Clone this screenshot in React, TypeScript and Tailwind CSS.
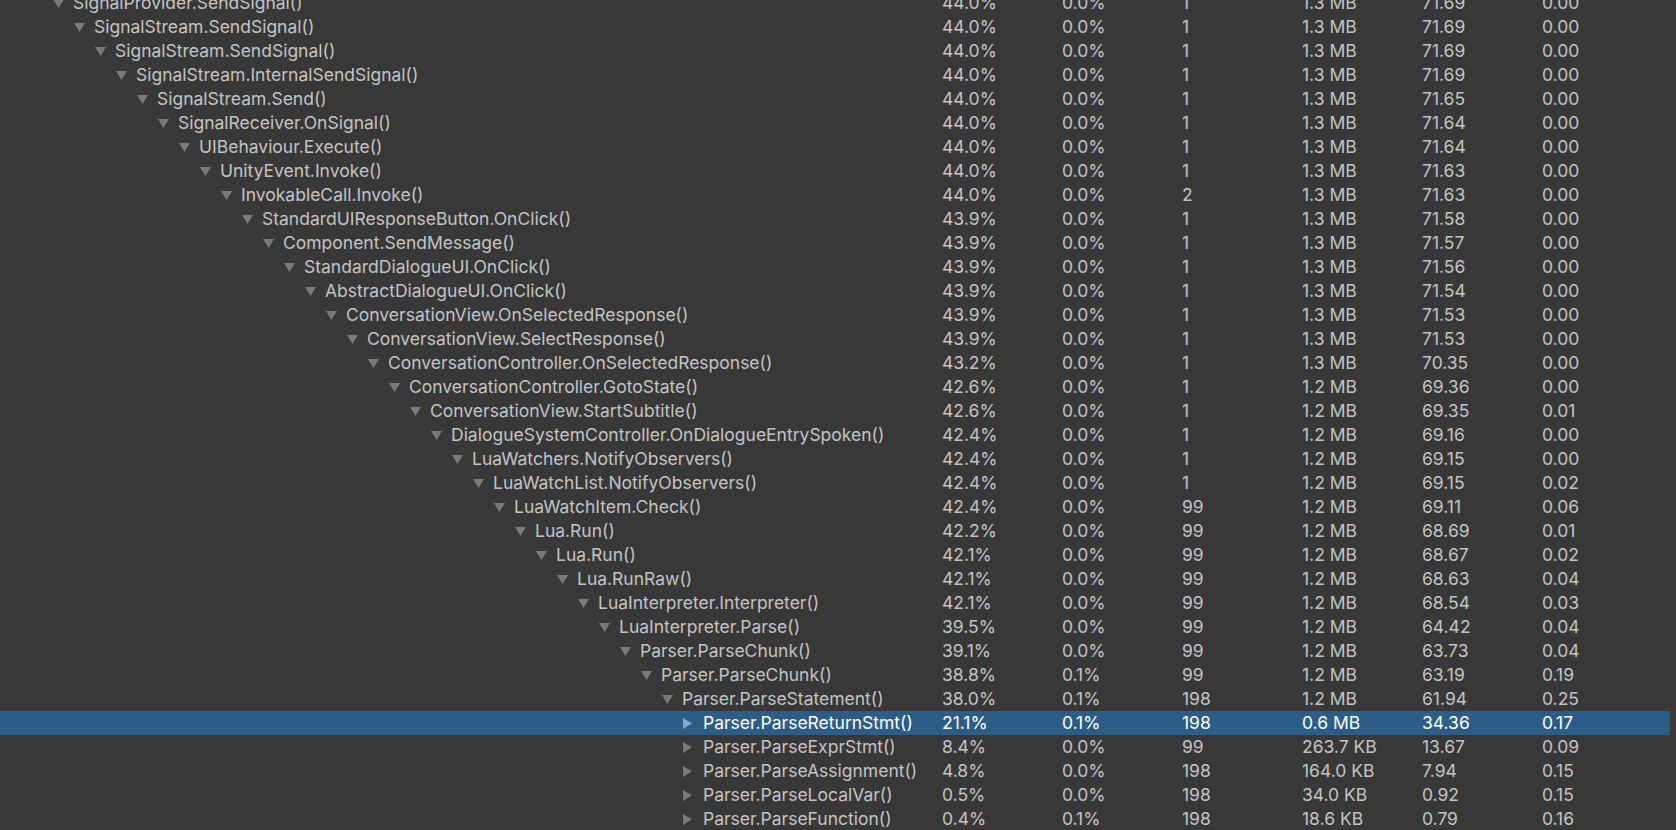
const rows: [string, number, string, string, string, string, string, string, boolean][] = [
  ["SignalProvider.SendSignal()", 0, "44.0%", "0.0%", "1", "1.3 MB", "71.69", "0.00", true],
  ["SignalStream.SendSignal()", 1, "44.0%", "0.0%", "1", "1.3 MB", "71.69", "0.00", true],
  ["SignalStream.SendSignal()", 2, "44.0%", "0.0%", "1", "1.3 MB", "71.69", "0.00", true],
  ["SignalStream.InternalSendSignal()", 3, "44.0%", "0.0%", "1", "1.3 MB", "71.69", "0.00", true],
  ["SignalStream.Send()", 4, "44.0%", "0.0%", "1", "1.3 MB", "71.65", "0.00", true],
  ["SignalReceiver.OnSignal()", 5, "44.0%", "0.0%", "1", "1.3 MB", "71.64", "0.00", true],
  ["UIBehaviour.Execute()", 6, "44.0%", "0.0%", "1", "1.3 MB", "71.64", "0.00", true],
  ["UnityEvent.Invoke()", 7, "44.0%", "0.0%", "1", "1.3 MB", "71.63", "0.00", true],
  ["InvokableCall.Invoke()", 8, "44.0%", "0.0%", "2", "1.3 MB", "71.63", "0.00", true],
  ["StandardUIResponseButton.OnClick()", 9, "43.9%", "0.0%", "1", "1.3 MB", "71.58", "0.00", true],
  ["Component.SendMessage()", 10, "43.9%", "0.0%", "1", "1.3 MB", "71.57", "0.00", true],
  ["StandardDialogueUI.OnClick()", 11, "43.9%", "0.0%", "1", "1.3 MB", "71.56", "0.00", true],
  ["AbstractDialogueUI.OnClick()", 12, "43.9%", "0.0%", "1", "1.3 MB", "71.54", "0.00", true],
  ["ConversationView.OnSelectedResponse()", 13, "43.9%", "0.0%", "1", "1.3 MB", "71.53", "0.00", true],
  ["ConversationView.SelectResponse()", 14, "43.9%", "0.0%", "1", "1.3 MB", "71.53", "0.00", true],
  ["ConversationController.OnSelectedResponse()", 15, "43.2%", "0.0%", "1", "1.3 MB", "70.35", "0.00", true],
  ["ConversationController.GotoState()", 16, "42.6%", "0.0%", "1", "1.2 MB", "69.36", "0.00", true],
  ["ConversationView.StartSubtitle()", 17, "42.6%", "0.0%", "1", "1.2 MB", "69.35", "0.01", true],
  ["DialogueSystemController.OnDialogueEntrySpoken()", 18, "42.4%", "0.0%", "1", "1.2 MB", "69.16", "0.00", true],
  ["LuaWatchers.NotifyObservers()", 19, "42.4%", "0.0%", "1", "1.2 MB", "69.15", "0.00", true],
  ["LuaWatchList.NotifyObservers()", 20, "42.4%", "0.0%", "1", "1.2 MB", "69.15", "0.02", true],
  ["LuaWatchItem.Check()", 21, "42.4%", "0.0%", "99", "1.2 MB", "69.11", "0.06", true],
  ["Lua.Run()", 22, "42.2%", "0.0%", "99", "1.2 MB", "68.69", "0.01", true],
  ["Lua.Run()", 23, "42.1%", "0.0%", "99", "1.2 MB", "68.67", "0.02", true],
  ["Lua.RunRaw()", 24, "42.1%", "0.0%", "99", "1.2 MB", "68.63", "0.04", true],
  ["LuaInterpreter.Interpreter()", 25, "42.1%", "0.0%", "99", "1.2 MB", "68.54", "0.03", true],
  ["LuaInterpreter.Parse()", 26, "39.5%", "0.0%", "99", "1.2 MB", "64.42", "0.04", true],
  ["Parser.ParseChunk()", 27, "39.1%", "0.0%", "99", "1.2 MB", "63.73", "0.04", true],
  ["Parser.ParseChunk()", 28, "38.8%", "0.1%", "99", "1.2 MB", "63.19", "0.19", true],
  ["Parser.ParseStatement()", 29, "38.0%", "0.1%", "198", "1.2 MB", "61.94", "0.25", true],
  ["Parser.ParseReturnStmt()", 30, "21.1%", "0.1%", "198", "0.6 MB", "34.36", "0.17", false],
  ["Parser.ParseExprStmt()", 30, "8.4%", "0.0%", "99", "263.7 KB", "13.67", "0.09", false],
  ["Parser.ParseAssignment()", 30, "4.8%", "0.0%", "198", "164.0 KB", "7.94", "0.15", false],
  ["Parser.ParseLocalVar()", 30, "0.5%", "0.0%", "198", "34.0 KB", "0.92", "0.15", false],
  ["Parser.ParseFunction()", 30, "0.4%", "0.1%", "198", "18.6 KB", "0.79", "0.16", false],
];

export default function App() {
  return (
    <div className="w-[1676px] h-[830px] bg-[#383838] overflow-hidden text-[17.5px] text-[#c4c4c4]" style={{ fontFamily: "Inter, 'Noto Sans', sans-serif" }}>
      <div className="mt-[-9px] w-[1670px]">
        {rows.map((r, i) => {
          const sel = i === 30;
          return (
            <div key={i} className={`flex items-center h-[24px] leading-[24px] whitespace-nowrap ${sel ? "bg-[#2c5d87] text-white" : ""}`}>
              <div className="w-[942px] flex items-center shrink-0" style={{ paddingLeft: 53 + r[1] * 21 }}>
                <span className="w-[20px] shrink-0 flex items-center">
                  {r[8] ? (
                    <svg width="11" height="9" viewBox="0 0 11 9"><path d="M0 0 L11 0 L5.5 9 Z" fill="#7a7a7a" /></svg>
                  ) : (
                    <svg width="9" height="11" viewBox="0 0 9 11"><path d="M0 0 L9 5.5 L0 11 Z" fill={sel ? "#8aa6c0" : "#7a7a7a"} /></svg>
                  )}
                </span>
                <span>{r[0]}</span>
              </div>
              <div className="w-[120px] shrink-0">{r[2]}</div>
              <div className="w-[120px] shrink-0">{r[3]}</div>
              <div className="w-[120px] shrink-0">{r[4]}</div>
              <div className="w-[120px] shrink-0">{r[5]}</div>
              <div className="w-[120px] shrink-0">{r[6]}</div>
              <div className="w-[120px] shrink-0">{r[7]}</div>
            </div>
          );
        })}
      </div>
    </div>
  );
}
